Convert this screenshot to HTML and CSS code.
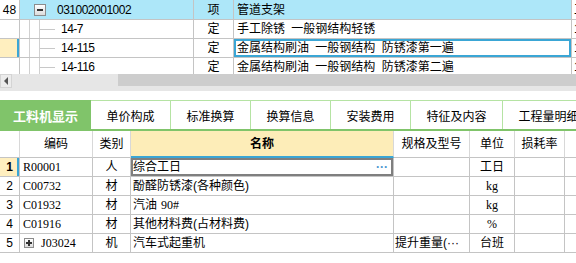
FILE: index.html
```html
<!DOCTYPE html>
<html lang="zh-CN">
<head>
<meta charset="utf-8">
<title>工料机显示</title>
<link rel="stylesheet" href="styles.css">
</head>
<body>
<div class="app">
  <section class="top">
    <div class="tgrid">
      <div class="c rn">48</div>
      <div class="c tree parent"><span class="toggle"></span><span class="code">031002001002</span></div>
      <div class="c ctr parent">项</div>
      <div class="c name parent">管道支架</div>
      <div class="c more">工</div>

      <div class="c rn"></div>
      <div class="c tree"><span class="ind"></span><span class="ind"></span><span class="branch"></span><span class="code">14-7</span></div>
      <div class="c ctr">定</div>
      <div class="c name">手工除锈 一般钢结构轻锈</div>
      <div class="c more">1</div>

      <div class="c rn cur"></div>
      <div class="c tree"><span class="ind"></span><span class="ind"></span><span class="branch"></span><span class="code">14-115</span></div>
      <div class="c ctr">定</div>
      <div class="c name sel">金属结构刷油 一般钢结构 防锈漆第一遍</div>
      <div class="c more">1</div>

      <div class="c rn"></div>
      <div class="c tree"><span class="ind"></span><span class="ind"></span><span class="branch"></span><span class="code">14-116</span></div>
      <div class="c ctr">定</div>
      <div class="c name">金属结构刷油 一般钢结构 防锈漆第二遍</div>
      <div class="c more">1</div>
    </div>
  </section>

  <div class="hscroll">
    <div class="arrow"><span class="tri"></span></div>
    <div class="thumb"></div>
  </div>

  <div class="spacer"></div>

  <nav class="tabs">
    <div class="tab on">工料机显示</div>
    <div class="tab">单价构成</div>
    <div class="tab">标准换算</div>
    <div class="tab">换算信息</div>
    <div class="tab">安装费用</div>
    <div class="tab wide">特征及内容</div>
    <div class="tab wide">工程量明细</div>
  </nav>

  <section class="bottom">
    <div class="bgrid">
      <div class="c h"></div>
      <div class="c h">编码</div>
      <div class="c h">类别</div>
      <div class="c h hname">名称</div>
      <div class="c h">规格及型号</div>
      <div class="c h">单位</div>
      <div class="c h">损耗率</div>
      <div class="c h"></div>

      <div class="c rn cur">1</div>
      <div class="c code2">R00001</div>
      <div class="c ctr">人</div>
      <div class="c nm edit"><span>综合工日</span><span class="dots">···</span></div>
      <div class="c spec"></div>
      <div class="c ctr">工日</div>
      <div class="c"></div>
      <div class="c"></div>

      <div class="c rn">2</div>
      <div class="c code2">C00732</div>
      <div class="c ctr">材</div>
      <div class="c nm">酚醛防锈漆(各种颜色)</div>
      <div class="c spec"></div>
      <div class="c ctr unit">kg</div>
      <div class="c"></div>
      <div class="c"></div>

      <div class="c rn">3</div>
      <div class="c code2">C01932</div>
      <div class="c ctr">材</div>
      <div class="c nm">汽油 <span class="lat">90#</span></div>
      <div class="c spec"></div>
      <div class="c ctr unit">kg</div>
      <div class="c"></div>
      <div class="c"></div>

      <div class="c rn">4</div>
      <div class="c code2">C01916</div>
      <div class="c ctr">材</div>
      <div class="c nm">其他材料费(占材料费)</div>
      <div class="c spec"></div>
      <div class="c ctr unit">%</div>
      <div class="c"></div>
      <div class="c"></div>

      <div class="c rn">5</div>
      <div class="c code2"><span class="plus"></span>J03024</div>
      <div class="c ctr">机</div>
      <div class="c nm">汽车式起重机</div>
      <div class="c spec">提升重量(···</div>
      <div class="c ctr">台班</div>
      <div class="c"></div>
      <div class="c"></div>
    </div>
  </section>
</div>
</body>
</html>
```

FILE: styles.css
```css
* { box-sizing: border-box; }
html, body { margin: 0; padding: 0; }
body {
  width: 576px;
  height: 263px;
  overflow: hidden;
  background: #fff;
  color: #000;
  font-family: "Liberation Sans", "Noto Sans CJK SC", sans-serif;
  font-size: 12px;
}
.app {
  width: 576px;
  height: 263px;
  display: flex;
  flex-direction: column;
  overflow: hidden;
}

/* generic cell */
.c {
  display: flex;
  align-items: center;
  white-space: nowrap;
  overflow: hidden;
  line-height: 1;
  padding: 0 3px;
  border-right: 1px solid #c4c4c4;
  border-bottom: 1px solid #c4c4c4;
}
.ctr { justify-content: center; padding: 0; }
.rn { justify-content: center; padding: 0; }

/* top tree grid */
.top { flex: none; height: 74px; overflow: hidden; }
.tgrid {
  display: grid;
  grid-template-columns: 20px 174px 40px 338px 40px;
  grid-template-rows: 20px repeat(3, 19px);
  width: 612px;
}
.parent { background: #ade7f9; }
.tree { padding: 0; }
.ind {
  flex: none;
  width: 10px;
  align-self: stretch;
  border-right: 1px solid #d0d0d0;
}
.branch {
  flex: none;
  width: 15px;
  height: 1px;
  background: #c8c8c8;
}
.tree .code { margin-left: 6px; letter-spacing: -0.5px; }
.toggle {
  flex: none;
  position: relative;
  width: 12px;
  height: 12px;
  margin-left: 14px;
  margin-right: 5px;
  border: 1px solid #8c8c8c;
  background: linear-gradient(#ffffff, #dcdcdc);
}
.toggle::after {
  content: "";
  position: absolute;
  left: 2px;
  top: 4px;
  width: 6px;
  height: 2px;
  background: #333;
}
.name { padding-left: 3px; word-spacing: 3px; }
.more { padding-left: 2px; border-right: none; }
.cur { background: #ffefbf; box-shadow: inset -2px 0 0 #3aa6d5; font-weight: bold; }
.sel { box-shadow: inset 0 0 0 2px #3aa6d5; }

/* horizontal scrollbar */
.hscroll {
  flex: none;
  height: 17px;
  display: flex;
  align-items: flex-start;
  background: #e6e6e6;
}
.arrow {
  flex: none;
  width: 12px;
  height: 14px;
  border: 1px solid #d4d4d4;
  background: #ececec;
  display: flex;
  align-items: center;
  justify-content: center;
}
.tri {
  width: 0;
  height: 0;
  border-top: 4px solid transparent;
  border-bottom: 4px solid transparent;
  border-right: 4px solid #555;
}
.thumb {
  flex: 1;
  margin-left: 106px;
  height: 12px;
  background: #cdcdcd;
}
.spacer { flex: none; height: 9px; }

/* tabs */
.tabs {
  flex: none;
  display: flex;
  height: 31px;
  border-bottom: 2px solid #80c46a;
  overflow: hidden;
}
.tab {
  flex: none;
  width: 80px;
  display: flex;
  align-items: center;
  justify-content: center;
  border-top: 1px solid #b5e3a3;
  border-right: 1px solid #b5e3a3;
  white-space: nowrap;
  font-size: 12px;
}
.tab.on {
  width: 91px;
  background: #80c46a;
  border-top-color: #80c46a;
  border-right: none;
  color: #fff;
  font-weight: bold;
  font-size: 13px;
}
.tab.wide { width: 92px; }

/* bottom grid */
.bottom { flex: 1; overflow: hidden; }
.bgrid {
  display: grid;
  grid-template-columns: 20px 73px 38px 263px 76px 45px 50px 40px;
  grid-template-rows: 27px repeat(5, 19px);
  width: 605px;
}
.h {
  justify-content: center;
  padding: 0;
  border-right-color: #d8d8d8;
}
.hname {
  background: #fdedb8;
  font-weight: bold;
  border-bottom: 2px solid #3aa6d5;
}
.code2 { font-family: "Liberation Serif", "Noto Sans CJK SC", serif; padding-left: 3px; }
.unit { font-family: "Liberation Serif", serif; }
.lat { font-family: "Liberation Serif", serif; margin-left: 4px; }
.nm { padding-left: 2px; }
.spec { padding-left: 1px; }
.edit {
  justify-content: space-between;
  box-shadow: inset 0 0 0 2px #7f7f7f;
  padding-right: 5px;
}
.dots { color: #4a96d0; font-weight: bold; letter-spacing: 0; }
.plus {
  flex: none;
  position: relative;
  width: 10px;
  height: 10px;
  margin-left: 1px;
  margin-right: 7px;
  border: 1px solid #8c8c8c;
  background: linear-gradient(#ffffff, #dcdcdc);
}
.plus::before, .plus::after {
  content: "";
  position: absolute;
  background: #333;
}
.plus::before { left: 1px; top: 3px; width: 6px; height: 2px; }
.plus::after { left: 3px; top: 1px; width: 2px; height: 6px; }
```
